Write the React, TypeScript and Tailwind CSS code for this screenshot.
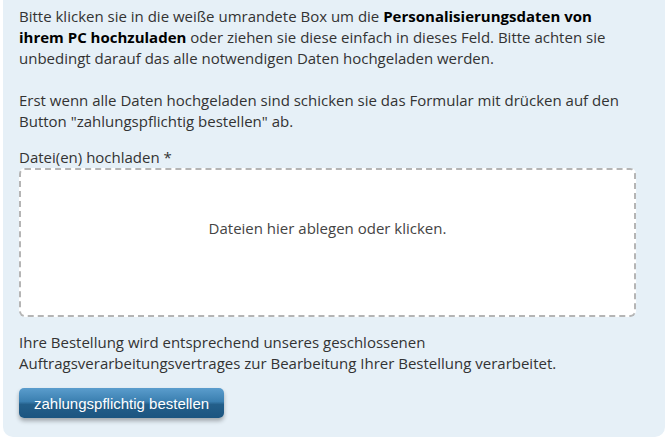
const App = () => {
    return (
        <div className="w-[667px] h-[444px] bg-white font-['Open_Sans',sans-serif] text-[15px] leading-[21px] text-[#333]">
            <div className="ml-[3px] w-[662px] h-[437px] bg-[#e6f0f7] rounded-b-[10px] pl-[16px] pr-[29px] pt-[6px]">
                <p>
                    Bitte klicken sie in die weiße umrandete Box um die{" "}
                    <strong className="font-bold text-black">
                        Personalisierungsdaten von ihrem PC hochzuladen
                    </strong>{" "}
                    oder ziehen sie diese einfach in dieses Feld. Bitte achten sie
                    unbedingt darauf das alle notwendigen Daten hochgeladen werden.
                    <br />
                    <br />
                    Erst wenn alle Daten hochgeladen sind schicken sie das Formular mit
                    drücken auf den Button "zahlungspflichtig bestellen" ab.
                </p>
                <div className="mt-[15px]">
                    <label className="block">Datei(en) hochladen *</label>
                    <div className="h-[149px] bg-white border-2 border-dashed border-[#b5b5b5] rounded-[6px] flex items-center justify-center cursor-pointer">
                        <span className="text-[#444] -mt-[28px]">Dateien hier ablegen oder klicken.</span>
                    </div>
                </div>
                <p className="mt-[15px]">
                    Ihre Bestellung wird entsprechend unseres geschlossenen
                    Auftragsverarbeitungsvertrages zur Bearbeitung Ihrer Bestellung verarbeitet.
                </p>
                <button className="mt-[14px] h-[30px] px-[15px] rounded-[5px] font-['Liberation_Sans',Arial,sans-serif] text-[15px] text-white bg-[linear-gradient(to_bottom,#5b9dcd_0%,#3a7fb0_45%,#235f8a_55%,#1b5580_100%)] shadow-[0_3px_4px_rgba(0,0,0,0.3)]">
                    zahlungspflichtig bestellen
                </button>
            </div>
        </div>
    );
};

export default App;
